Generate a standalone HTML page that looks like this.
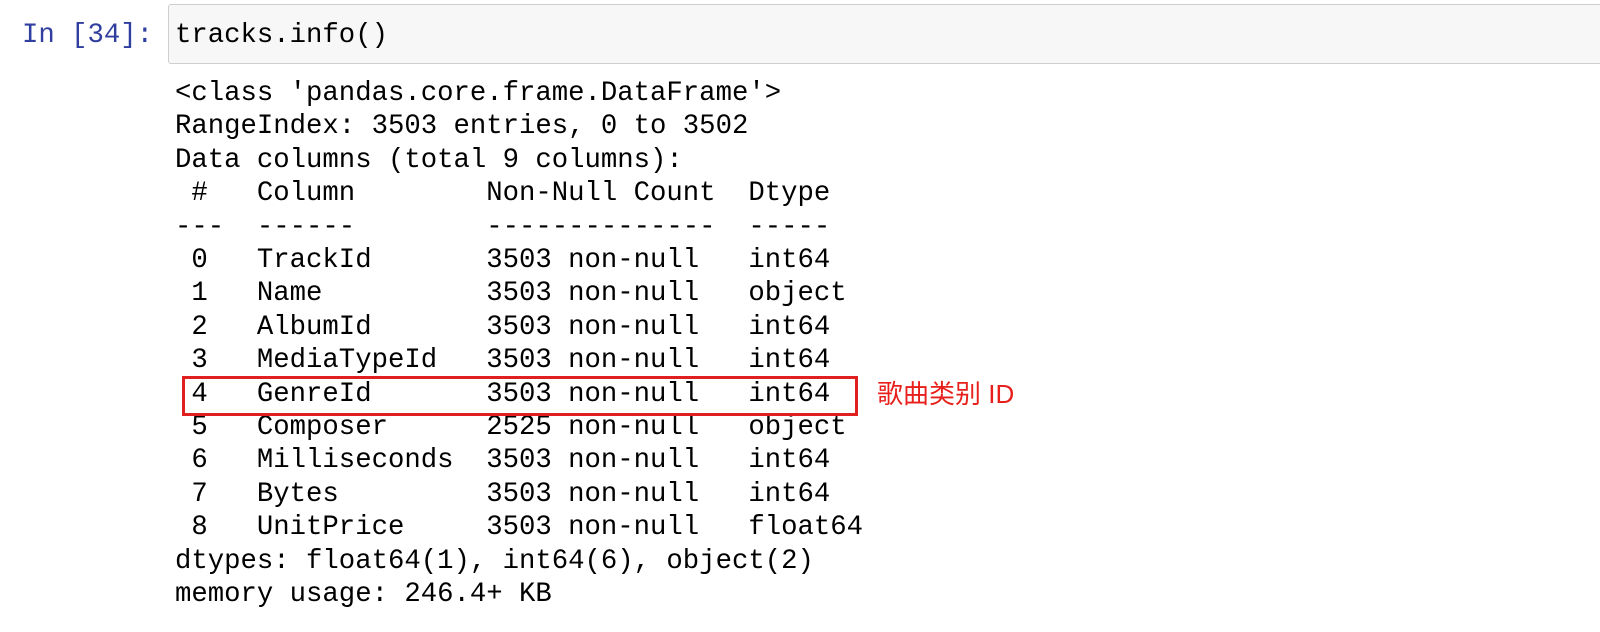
<!DOCTYPE html>
<html><head><meta charset="utf-8"><style>
body{margin:0;background:#fff;width:1600px;height:632px;overflow:hidden;position:relative;font-family:"Liberation Mono",monospace;}
.prompt{position:absolute;left:22px;top:19px;font-size:27.3px;color:#303f9f;line-height:34px;}
.box{position:absolute;left:168px;top:4px;width:1440px;height:58px;background:#f7f7f7;border:1px solid #cfcfcf;border-radius:3px;}
.code{position:absolute;left:175px;top:19px;font-size:27.3px;line-height:34px;color:#000;}
pre{position:absolute;left:175px;top:77px;margin:0;font-family:"Liberation Mono",monospace;font-size:27.3px;line-height:33.4px;color:#000;}
.rect{position:absolute;left:182px;top:376px;width:670px;height:34px;border:3px solid #e02020;}
.note{position:absolute;left:877px;top:377px;font-family:"Liberation Sans","Noto Sans CJK SC",sans-serif;font-size:26px;color:#e8201c;line-height:34px;}
</style></head><body>
<div class="prompt">In [34]:</div>
<div class="box"></div>
<div class="code">tracks.info()</div>
<pre>&lt;class 'pandas.core.frame.DataFrame'&gt;
RangeIndex: 3503 entries, 0 to 3502
Data columns (total 9 columns):
 #   Column        Non-Null Count  Dtype  
---  ------        --------------  -----  
 0   TrackId       3503 non-null   int64  
 1   Name          3503 non-null   object 
 2   AlbumId       3503 non-null   int64  
 3   MediaTypeId   3503 non-null   int64  
 4   GenreId       3503 non-null   int64  
 5   Composer      2525 non-null   object 
 6   Milliseconds  3503 non-null   int64  
 7   Bytes         3503 non-null   int64  
 8   UnitPrice     3503 non-null   float64
dtypes: float64(1), int64(6), object(2)
memory usage: 246.4+ KB</pre>
<div class="rect"></div>
<div class="note">歌曲类别 ID</div>
</body></html>
